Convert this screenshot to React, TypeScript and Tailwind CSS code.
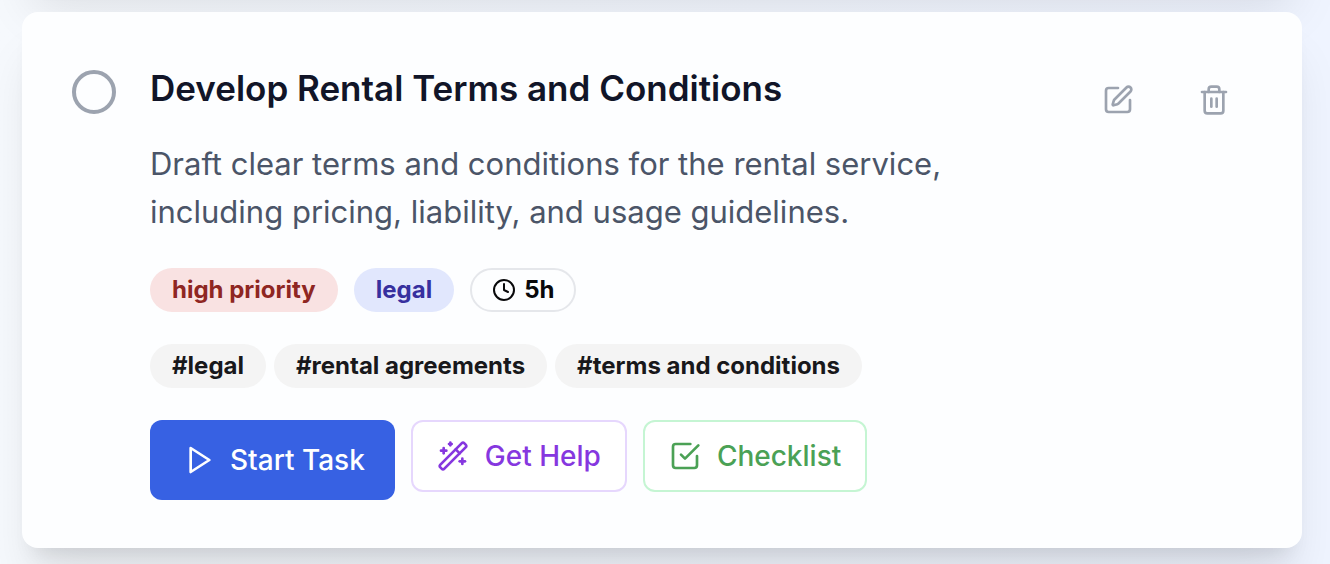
import { Clock, SquarePen, Trash2, WandSparkles } from 'lucide-react'
import { FiCheckSquare, FiPlay } from 'react-icons/fi'

const cardShadow = 'shadow-[0_40px_50px_-10px_rgba(0,0,0,0.1),0_16px_20px_-12px_rgba(0,0,0,0.1)]'

const tags = ['legal', 'rental agreements', 'terms and conditions']

const TaskBadges = () => {
    return (
        <div className="mt-8 flex flex-wrap gap-4 text-2xl font-bold">
            <span className="flex h-11 items-center rounded-full bg-[#f9e2e2] px-[22px] text-[#8f2622]">
                high priority
            </span>
            <span className="flex h-11 items-center rounded-full bg-[#e1e7fd] px-[22px] text-[#37309f]">
                legal
            </span>
            <span className="flex h-11 items-center gap-2 rounded-full border-2 border-[#e5e7eb] px-5 text-[#09090b]">
                <Clock className="size-6" />
                5h
            </span>
        </div>
    )
}

const TaskTags = () => {
    return (
        <ul className="mt-8 flex flex-wrap gap-2 text-2xl font-bold text-[#18181b]">
            {tags.map((tag) => (
                <li key={tag} className="flex h-11 items-center rounded-full bg-[#f4f4f4] px-[22px]">
                    #{tag}
                </li>
            ))}
        </ul>
    )
}

const TaskActions = () => {
    return (
        <div className="mt-8 flex flex-wrap items-start gap-4 text-[28px] font-medium">
            <button
                type="button"
                className="flex h-20 items-center gap-3.5 rounded-xl bg-[#3761e3] pr-[30px] pl-[34px] text-white"
            >
                <FiPlay className="size-8" />
                Start Task
            </button>
            <button
                type="button"
                className="flex h-[72px] items-center gap-4 rounded-xl border-2 border-[#e6d7fd] bg-white px-6 text-[#8637df]"
            >
                <WandSparkles className="size-8" />
                Get Help
            </button>
            <button
                type="button"
                className="flex h-[72px] items-center gap-4 rounded-xl border-2 border-[#c5f5d3] bg-white px-6 text-[#4ba155]"
            >
                <FiCheckSquare className="size-8" />
                Checklist
            </button>
        </div>
    )
}

const TaskCard = () => {
    return (
        <article className={`flex items-start gap-8 rounded-2xl bg-[#fdfeff] p-12 ${cardShadow}`}>
            <input
                type="checkbox"
                aria-label="Mark task as complete"
                className="mx-0.5 mt-2.5 size-11 shrink-0 appearance-none rounded-full border-4 border-[#9ca3af] checked:bg-[#9ca3af]"
            />

            <div className="min-w-0 flex-1">
                <h3 className="text-[35px] leading-14 font-semibold text-[#111528]">
                    Develop Rental Terms and Conditions
                </h3>
                <p className="mt-6 max-w-[860px] text-[31px] leading-12 text-[#4b5568]">
                    Draft clear terms and conditions for the rental service, including pricing,
                    liability, and usage guidelines.
                </p>
                <TaskBadges />
                <TaskTags />
                <TaskActions />
            </div>

            <div className="flex gap-4 text-[#9ca3af]">
                <button type="button" aria-label="Edit task" className="p-6">
                    <SquarePen className="size-8" />
                </button>
                <button type="button" aria-label="Delete task" className="p-6">
                    <Trash2 className="size-8" />
                </button>
            </div>
        </article>
    )
}

export default function App() {
    return (
        <main className="h-screen overflow-hidden bg-linear-to-r from-[#f6f9fd] to-[#eff4ff] pr-7 pl-[22px] font-['Inter',sans-serif]">
            {/* bottom edge of the previous card in the list */}
            <div className={`-mt-75 mb-8 h-70 rounded-2xl bg-white ${cardShadow}`} />
            <TaskCard />
        </main>
    )
}
